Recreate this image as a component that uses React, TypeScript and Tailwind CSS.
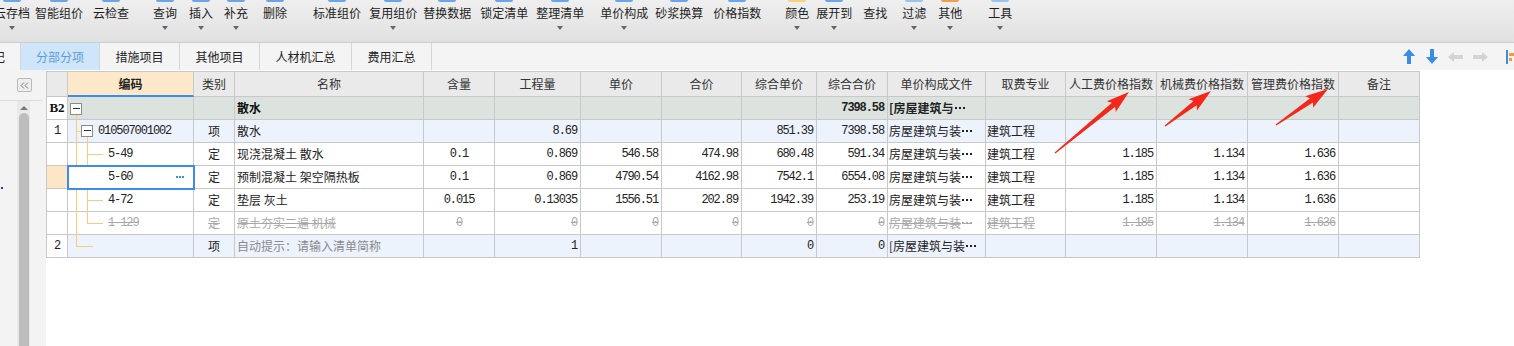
import React from "react";

const cjk = "font-['Noto_Sans_CJK_SC','Noto_Sans',sans-serif]";
const mono = "font-['Liberation_Mono',monospace] text-[12px] tracking-[-1.1px]";

type Tool = { label: string; gap: string; arrow?: boolean; icon?: string };

const tools: Tool[] = [
  { label: "云存档", gap: "-ml-[6px]", arrow: true, icon: "bg-[#6aa5e8]" },
  { label: "智能组价", gap: "ml-[5px]", icon: "bg-[#6aa5e8]" },
  { label: "云检查", gap: "ml-[10px]", icon: "bg-[#6aa5e8]" },
  { label: "查询", gap: "ml-[24px]", arrow: true, icon: "bg-[#6aa5e8]" },
  { label: "插入", gap: "ml-[12px]", arrow: true, icon: "bg-[#6aa5e8]" },
  { label: "补充", gap: "ml-[11px]", arrow: true, icon: "bg-[#6aa5e8]" },
  { label: "删除", gap: "ml-[15px]", icon: "bg-[#6aa5e8]" },
  { label: "标准组价", gap: "ml-[26px]", icon: "bg-[#6aa5e8]" },
  { label: "复用组价", gap: "ml-[8px]", arrow: true, icon: "bg-[#6aa5e8]" },
  { label: "替换数据", gap: "ml-[6px]", icon: "bg-[#6aa5e8]" },
  { label: "锁定清单", gap: "ml-[9px]", icon: "bg-[#6aa5e8]" },
  { label: "整理清单", gap: "ml-[8px]", arrow: true, icon: "bg-[#6aa5e8]" },
  { label: "单价构成", gap: "ml-[16px]", arrow: true, icon: "bg-[#6aa5e8]" },
  { label: "砂浆换算", gap: "ml-[7px]", icon: "bg-[#6aa5e8]" },
  { label: "价格指数", gap: "ml-[10px]", icon: "bg-[#6aa5e8]" },
  { label: "颜色", gap: "ml-[24px]", arrow: true, icon: "bg-[#f5d27f]" },
  { label: "展开到", gap: "ml-[7px]", arrow: true, icon: "bg-[#6aa5e8]" },
  { label: "查找", gap: "ml-[11px]" },
  { label: "过滤", gap: "ml-[15px]", arrow: true, icon: "bg-[#9cc3ee]" },
  { label: "其他", gap: "ml-[12px]", arrow: true, icon: "bg-[#f0a04b]" },
  { label: "工具", gap: "ml-[26px]", arrow: true, icon: "bg-[#9cc3ee]" },
];

function Toolbar() {
  return (
    <div className="h-[43px] border-b border-[#cdcdcd] bg-linear-to-b from-[#efefef] to-[#e1e1e1] flex items-start">
      {tools.map((t) => (
        <div key={t.label} className={`flex flex-col items-center shrink-0 ${t.gap}`}>
          <div className={`h-[2px] w-[18px] rounded-b-[3px] ${t.icon ?? "bg-transparent"}`} />
          <span className="mt-[3px] text-[12px] leading-[16px] text-[#1e1e1e] whitespace-nowrap">{t.label}</span>
          {t.arrow && <span className="mt-[5px] w-0 h-0 border-x-[3px] border-t-[4px] border-x-transparent border-t-[#666]" />}
        </div>
      ))}
    </div>
  );
}

const tabs = [
  { label: "分部分项", w: "w-[79px]", active: true },
  { label: "措施项目", w: "w-[80px]" },
  { label: "其他项目", w: "w-[80px]" },
  { label: "人材机汇总", w: "w-[92px]" },
  { label: "费用汇总", w: "w-[80px]" },
];

function TabBar() {
  return (
    <div className="h-[27px] bg-[#f4f4f4] flex items-stretch text-[12px]">
      <div className="w-[21px] border-r border-[#d6d6d6] overflow-hidden flex items-center">
        <span className="-ml-[7px] text-[#222]">记</span>
      </div>
      {tabs.map((t) => (
        <div
          key={t.label}
          className={`${t.w} border-r border-[#d6d6d6] flex items-center justify-center ${
            t.active ? "bg-[#cfe6fa] text-[#5b9cdc]" : "text-[#222]"
          }`}
        >
          {t.label}
        </div>
      ))}
      <div className="ml-auto flex items-center">
        <svg width="12" height="15" viewBox="0 0 12 15">
          <polygon points="6,0 12,7 8,7 8,15 4,15 4,7 0,7" fill="#3b8ce6" />
        </svg>
        <svg className="ml-[11px]" width="12" height="15" viewBox="0 0 12 15">
          <polygon points="4,0 8,0 8,8 12,8 6,15 0,8 4,8" fill="#3b8ce6" />
        </svg>
        <svg className="ml-[10px]" width="15" height="10" viewBox="0 0 15 10">
          <polygon points="0,5 6,0 6,3 15,3 15,7 6,7 6,10" fill="#d4d4d4" />
        </svg>
        <svg className="ml-[10px]" width="15" height="10" viewBox="0 0 15 10">
          <polygon points="15,5 9,0 9,3 0,3 0,7 9,7 9,10" fill="#d4d4d4" />
        </svg>
        <svg className="ml-[18px]" width="8" height="14" viewBox="0 0 8 14">
          <rect x="0" y="0" width="2" height="14" fill="#3b8ce6" />
          <rect x="3" y="3" width="5" height="3" fill="#f39c34" />
          <rect x="3" y="8" width="3" height="3" fill="#f39c34" />
        </svg>
      </div>
    </div>
  );
}

function LeftPanel() {
  return (
    <div className="relative w-[46px] shrink-0 bg-[#f3f3f3] flex flex-col">
      <div className="h-[30px]">
        <div className="ml-[17px] mt-[8px] w-[15px] h-[14px] border border-[#b9b9b9] rounded-[2px] bg-[#efefef] flex items-center justify-center">
          <svg width="9" height="7" viewBox="0 0 9 7">
            <polyline points="4,0.5 1,3.5 4,6.5" fill="none" stroke="#777" strokeWidth="1" />
            <polyline points="8,0.5 5,3.5 8,6.5" fill="none" stroke="#777" strokeWidth="1" />
          </svg>
        </div>
      </div>
      <div className="h-px w-[42px] bg-[#dcdcdc]" />
      <div className="ml-[17px] w-[13px] flex-1 bg-[#e9e9e9] flex flex-col items-center">
        <span className="mt-[5px] w-0 h-0 border-x-[4px] border-b-[4px] border-x-transparent border-b-[#7a7a7a]" />
        <div className="mt-[3px] w-[10px] flex-1 rounded-t-[5px] bg-[#bdbdbd]" />
      </div>
      <span className="absolute left-[1px] top-[117px] w-[2px] h-[2px] bg-[#1f3f9f]" />
    </div>
  );
}

type Row = {
  no: string;
  type: "group" | "list" | "item" | "del" | "new";
  code?: string;
  kind?: string;
  name?: string;
  content?: string;
  qty?: string;
  price?: string;
  total?: string;
  cprice?: string;
  ctotal?: string;
  file?: string;
  fee?: string;
  lab?: string;
  mach?: string;
  mgmt?: string;
  selected?: boolean;
};

const rows: Row[] = [
  { no: "B2", type: "group", name: "散水", ctotal: "7398.58", file: "[房屋建筑与" },
  {
    no: "1", type: "list", code: "010507001002", kind: "项", name: "散水", qty: "8.69",
    cprice: "851.39", ctotal: "7398.58", file: "房屋建筑与装", fee: "建筑工程",
  },
  {
    no: "", type: "item", code: "5-49", kind: "定", name: "现浇混凝土 散水", content: "0.1", qty: "0.869",
    price: "546.58", total: "474.98", cprice: "680.48", ctotal: "591.34", file: "房屋建筑与装",
    fee: "建筑工程", lab: "1.185", mach: "1.134", mgmt: "1.636",
  },
  {
    no: "", type: "item", code: "5-60", kind: "定", name: "预制混凝土 架空隔热板", content: "0.1", qty: "0.869",
    price: "4790.54", total: "4162.98", cprice: "7542.1", ctotal: "6554.08", file: "房屋建筑与装",
    fee: "建筑工程", lab: "1.185", mach: "1.134", mgmt: "1.636", selected: true,
  },
  {
    no: "", type: "item", code: "4-72", kind: "定", name: "垫层 灰土", content: "0.015", qty: "0.13035",
    price: "1556.51", total: "202.89", cprice: "1942.39", ctotal: "253.19", file: "房屋建筑与装",
    fee: "建筑工程", lab: "1.185", mach: "1.134", mgmt: "1.636",
  },
  {
    no: "", type: "del", code: "1-129", kind: "定", name: "原土夯实二遍 机械", content: "0", qty: "0",
    price: "0", total: "0", cprice: "0", ctotal: "0", file: "房屋建筑与装",
    fee: "建筑工程", lab: "1.185", mach: "1.134", mgmt: "1.636",
  },
  {
    no: "2", type: "new", kind: "项", name: "自动提示：请输入清单简称", qty: "1",
    cprice: "0", ctotal: "0", file: "[房屋建筑与装",
  },
];

const headers = [
  "", "编码", "类别", "名称", "含量", "工程量", "单价", "合价", "综合单价", "综合合价",
  "单价构成文件", "取费专业", "人工费价格指数", "机械费价格指数", "管理费价格指数", "备注",
];

const base = "border-r border-b border-[#c8c8c8] flex items-center overflow-hidden whitespace-nowrap";

function Dots({ color, strike }: { color: string; strike?: boolean }) {
  return (
    <span className="relative inline-flex items-center gap-[2px] ml-[1px] h-[12px]">
      <span className={`w-[2px] h-[2px] ${color}`} />
      <span className={`w-[2px] h-[2px] ${color}`} />
      <span className={`w-[2px] h-[2px] ${color}`} />
      {strike && <span className={`absolute left-0 right-0 top-[6px] h-px ${color}`} />}
    </span>
  );
}

function Sheet() {
  const rowBg = (r: Row) =>
    r.type === "group" ? "bg-[#dce3df]" : r.type === "list" || r.type === "new" ? "bg-[#edf3fd]" : "bg-white";

  return (
    <div className="relative w-fit">
      <div className="grid grid-cols-[21px_126px_41px_189px_71px_86px_81px_80px_75px_71px_98px_80px_91px_91px_91px_81px] grid-rows-[25px_repeat(7,23px)] border-l border-t border-[#c8c8c8] text-[12px]">
        {headers.map((h, i) => (
          <div
            key={"h" + i}
            className={`${base} justify-center ${
              i === 1
                ? "bg-[#fde8c9] font-bold text-[#222] border-b-2 border-b-[#3d8ce8]"
                : "bg-[#eaeaea] text-[#333]"
            }`}
          >
            {h}
          </div>
        ))}
        {rows.map((r, ri) => {
          const bg = rowBg(r);
          const del = r.type === "del";
          const tone = del ? "text-[#a8a8a8] line-through" : "text-[#222]";
          const numCell = (v: string | undefined, k: string, center = false) => (
            <div key={k} className={`${base} ${bg} ${center ? "justify-center" : "justify-end pr-[3px]"}`}>
              <span className={`${mono} ${tone} ${r.type === "group" ? "font-bold" : ""}`}>{v ?? ""}</span>
            </div>
          );
          return (
            <React.Fragment key={"r" + ri}>
              <div className={`${base} justify-center ${r.selected ? "bg-[#fde5c8]" : "bg-white"}`}>
                {r.no === "B2" ? (
                  <span className="font-['Liberation_Serif',serif] font-bold text-[13px] text-[#111]">B2</span>
                ) : (
                  <span className={`${mono} text-[#222]`}>{r.no}</span>
                )}
              </div>
              <div
                className={`${base} ${bg} ${
                  r.type === "list" ? "pl-[30px]" : "pl-[40px]"
                } ${r.selected ? "relative z-10 outline-2 outline-[#3d8ce8] -outline-offset-1 justify-between pr-[9px]" : ""}`}
              >
                <span className={`${mono} ${tone}`}>{r.code ?? ""}</span>
                {r.selected && (
                  <span className="flex gap-[1px]">
                    <span className="w-[2px] h-[2px] bg-[#3d8ce8]" />
                    <span className="w-[2px] h-[2px] bg-[#3d8ce8]" />
                    <span className="w-[2px] h-[2px] bg-[#3d8ce8]" />
                  </span>
                )}
              </div>
              <div className={`${base} ${bg} justify-center`}>
                <span className={tone}>{r.kind ?? ""}</span>
              </div>
              <div className={`${base} ${bg} pl-[2px]`}>
                <span
                  className={
                    r.type === "group"
                      ? "font-bold text-[#111]"
                      : r.type === "new"
                      ? "text-[#8a8a8a]"
                      : tone
                  }
                >
                  {r.name ?? ""}
                </span>
              </div>
              {numCell(r.content, "c", true)}
              {numCell(r.qty, "q")}
              {numCell(r.price, "p")}
              {numCell(r.total, "t")}
              {numCell(r.cprice, "cp")}
              {numCell(r.ctotal, "ct")}
              <div className={`${base} ${bg} pl-[1px]`}>
                <span className={`${tone} ${r.type === "group" ? "font-bold" : ""}`}>{r.file ?? ""}</span>
                {r.file && <Dots color={del ? "bg-[#a8a8a8]" : "bg-[#222]"} strike={del} />}
              </div>
              <div className={`${base} ${bg} pl-[1px]`}>
                <span className={tone}>{r.fee ?? ""}</span>
              </div>
              {numCell(r.lab, "l")}
              {numCell(r.mach, "m")}
              {numCell(r.mgmt, "g")}
              <div className={`${base} ${bg}`} />
            </React.Fragment>
          );
        })}
      </div>
      {/* tree lines */}
      <svg className="absolute left-0 top-0 pointer-events-none" width="200" height="200">
        <g fill="#ffc97a">
          <rect x="30" y="44" width="1" height="132" />
          <rect x="30" y="175" width="17" height="1" />
          <rect x="31" y="60" width="4" height="1" />
          <rect x="41" y="66" width="1" height="87" />
          <rect x="42" y="83" width="15" height="1" />
          <rect x="42" y="106" width="15" height="1" />
          <rect x="42" y="129" width="15" height="1" />
          <rect x="42" y="152" width="15" height="1" />
        </g>
        <rect x="24.5" y="32.5" width="11" height="11" fill="#fff" stroke="#8a8a8a" />
        <rect x="27" y="37" width="7" height="1" fill="#333" />
        <rect x="35.5" y="54.5" width="11" height="11" fill="#fff" stroke="#8a8a8a" />
        <rect x="38" y="59" width="7" height="1" fill="#333" />
      </svg>
    </div>
  );
}

function arrowPoints(tx: number, ty: number, px: number, py: number) {
  const dx = px - tx;
  const dy = py - ty;
  const len = Math.hypot(dx, dy);
  const ux = dx / len;
  const uy = dy / len;
  const nx = -uy;
  const ny = ux;
  const H = 20;
  const W = 7;
  const S = 2.6;
  const T = 0.6;
  const bx = px - ux * H;
  const by = py - uy * H;
  const cx = px - ux * (H + 3);
  const cy = py - uy * (H + 3);
  const pts = [
    [tx + nx * T, ty + ny * T],
    [bx + nx * S, by + ny * S],
    [cx + nx * W, cy + ny * W],
    [px, py],
    [cx - nx * W, cy - ny * W],
    [bx - nx * S, by - ny * S],
    [tx - nx * T, ty - ny * T],
  ];
  return pts.map((p) => p.join(",")).join(" ");
}

export default function App() {
  return (
    <div className={`relative w-[1514px] h-[346px] overflow-hidden bg-white text-[#222] ${cjk}`}>
      <Toolbar />
      <TabBar />
      <div className="flex h-[276px]">
        <LeftPanel />
        <div className="flex-1 pt-px bg-white">
          <Sheet />
        </div>
      </div>
      <svg className="absolute inset-0 pointer-events-none" width="1514" height="346">
        <polygon points={arrowPoints(1055, 153, 1129, 92)} fill="#f4271b" />
        <polygon points={arrowPoints(1165, 126, 1211, 91)} fill="#f4271b" />
        <polygon points={arrowPoints(1276, 125, 1328, 89)} fill="#f4271b" />
      </svg>
    </div>
  );
}
